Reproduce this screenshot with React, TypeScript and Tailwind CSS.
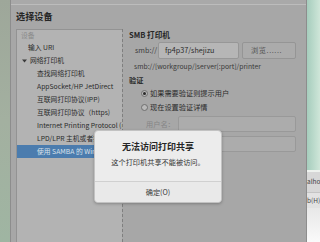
import React from 'react';

const FONT = { fontFamily: '"Noto Sans CJK SC", "Noto Sans", sans-serif' };

type Item = { label: string; indent: number; arrow?: boolean; selected?: boolean };

const items: Item[] = [
  { label: '输入 URI', indent: 11 },
  { label: '网络打印机', indent: 12, arrow: true },
  { label: '查找网络打印机', indent: 20 },
  { label: 'AppSocket/HP JetDirect', indent: 20 },
  { label: '互联网打印协议(IPP)', indent: 20 },
  { label: '互联网打印协议（https)', indent: 20 },
  { label: 'Internet Printing Protocol (ipp)', indent: 20 },
  { label: 'LPD/LPR 主机或者打印机', indent: 20 },
  { label: '使用 SAMBA 的 Windows 打印机', indent: 20, selected: true },
];

function Radio({ checked }: { checked?: boolean }) {
  return (
    <span className="flex h-[7px] w-[7px] items-center justify-center rounded-full border border-[#6f6f6f] bg-[#b9b9b9]">
      {checked && <span className="h-[3px] w-[3px] rounded-full bg-[#2a2a2a]" />}
    </span>
  );
}

export default function App() {
  return (
    <div className="relative flex h-[242px] w-[320px] overflow-hidden bg-[#a6a6a6] text-[#2b2b2b]" style={FONT}>
      {/* desktop on the left */}
      <div className="w-[10px] shrink-0 bg-gradient-to-b from-[#9ea79a] via-[#a3b0a0] to-[#9fb5a2]" />

      {/* dimmed main window */}
      <div className="flex w-[297px] shrink-0 flex-col border-l border-r border-[#8d8d8d] bg-[#a7a7a7]">
        <div className="h-[5px] shrink-0 border-b border-[#bcbcbc] bg-[#a9a9a9]" />
        <div className="flex h-[24px] items-center pl-[5px] text-[9.2px] font-bold text-[#262626]">选择设备</div>

        <div className="flex flex-1">
          {/* device list */}
          <div className="ml-[5px] w-[106px] shrink-0 border-l border-t border-[#939393] bg-[#b3b3b3]">
            <div className="flex h-[11px] items-center pl-[4px] text-[6.8px] text-[#8b8b8b]">设备</div>
            {items.map((it) => (
              <div
                key={it.label}
                className={`flex h-[13px] items-center overflow-hidden whitespace-nowrap text-[6.8px] ${
                  it.selected ? 'bg-[#4b7cae] text-[#d9e1ea]' : 'text-[#2b2b2b]'
                }`}
                style={{ paddingLeft: it.indent }}
              >
                {it.arrow && (
                  <svg width="5" height="4" viewBox="0 0 5 4" className="-ml-[7px] mr-[3px] shrink-0">
                    <path d="M0 0.5 L5 0.5 L2.5 3.5 Z" fill="#3a3a3a" />
                  </svg>
                )}
                {it.label}
              </div>
            ))}
          </div>
          <div className="w-px shrink-0 border-l border-dashed border-[#7f7f7f]" />

          {/* SMB form */}
          <div className="ml-[6px] flex w-[167px] flex-col text-[7.2px]">
            <div className="flex h-[11px] items-center text-[7.6px] font-bold text-[#262626]">SMB 打印机</div>
            <div className="mt-[2px] flex h-[17px] items-center">
              <span className="w-[29px] pl-[6px] text-[#3c3c3c]">smb://</span>
              <div className="flex h-full w-[81px] items-center rounded-[2px] border border-[#979797] bg-[#b6b6b6] pl-[6px] text-[#2b2b2b]">
                fp4p37/shejizu
              </div>
              <div className="ml-[3px] flex h-full w-[54px] items-center rounded-[2px] border border-[#959595] bg-[#ababab] pl-[8px] tracking-[0.6px] text-[#555555]">
                浏览......
              </div>
            </div>
            <div className="mt-[2px] flex h-[10px] items-center whitespace-nowrap pl-[5px] text-[6.8px] text-[#3a3a3a]">
              smb://[workgroup/]server[:port]/printer
            </div>
            <div className="mt-[4px] flex h-[10px] items-center font-bold text-[#2b2b2b]">验证</div>
            <div className="mt-[2px] flex h-[12px] items-center gap-[2px] pl-[12px]">
              <Radio checked />
              <span>如果需要验证则提示用户</span>
            </div>
            <div className="mt-[2px] flex h-[12px] items-center gap-[2px] pl-[12px]">
              <Radio />
              <span>现在设置验证详情</span>
            </div>
            <div className="mt-[3px] flex h-[16px] items-center">
              <span className="w-[49px] pl-[17px] text-[#858585]">用户名：</span>
              <div className="h-full w-[118px] rounded-[2px] border border-[#999999] bg-[#acacac]" />
            </div>
            <div className="mt-[4px] flex h-[16px] items-center">
              <span className="w-[49px]" />
              <div className="h-full w-[118px] rounded-[2px] border border-[#999999] bg-[#acacac]" />
            </div>
          </div>
        </div>
      </div>

      {/* desktop / window behind on the right */}
      <div className="flex w-[13px] shrink-0 flex-col">
        <div className="h-[170px] bg-gradient-to-r from-[#a6cdbd] to-[#cfe6d9]" />
        <div className="h-[2px] bg-[#eef2ee]" />
        <div className="flex h-[20px] items-center overflow-hidden whitespace-nowrap bg-[#d7d7d7] text-[6.5px] text-[#444444]">
          alhost
        </div>
        <div className="h-px bg-[#c4c4c4]" />
        <div className="flex h-[15px] items-center overflow-hidden whitespace-nowrap bg-[#e2e2e2] text-[6.5px] text-[#444444]">
          b(H)
        </div>
        <div className="flex-1 bg-gradient-to-b from-[#e8e8e8] to-[#fafafa]" />
      </div>

      {/* message dialog */}
      <div className="absolute left-[94px] top-[130px] flex h-[73px] w-[128px] flex-col rounded-[4px] border border-[#c2c2c2] bg-[#ececec] pt-[9px] shadow-[0_1px_3px_rgba(0,0,0,0.25)]">
        <div className="flex h-[14px] items-center justify-center text-[9px] font-bold text-[#262626]">
          无法访问打印共享
        </div>
        <div className="mt-[2px] flex h-[12px] items-center justify-center text-[7.2px] text-[#333333]">
          这个打印机共享不能被访问。
        </div>
        <div className="mt-[13px] h-px bg-[#d0d0d0]" />
        <div className="flex flex-1 items-center justify-center rounded-b-[4px] bg-[#e9e9e9] text-[7.2px] text-[#3a3a3a]">
          确定(O)
        </div>
      </div>
    </div>
  );
}
